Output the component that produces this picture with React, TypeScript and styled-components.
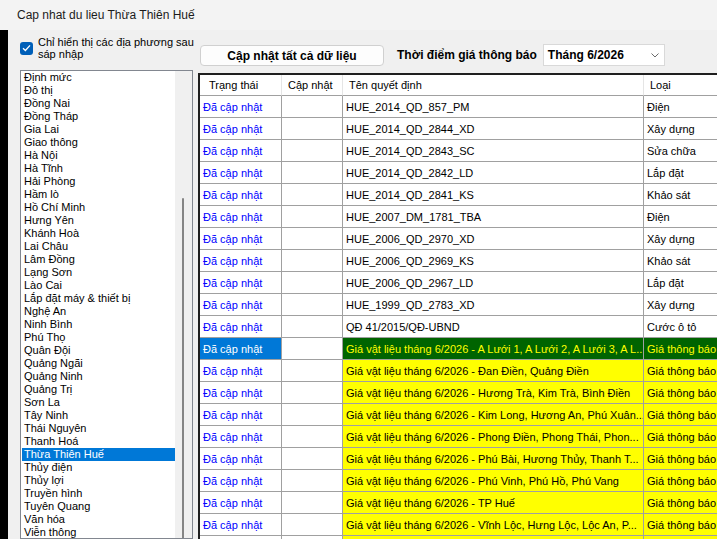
import React from 'react';
import styled, { createGlobalStyle } from 'styled-components';

const GlobalStyle = createGlobalStyle`
  html, body {
    margin: 0;
    padding: 0;
    background: #f0f0f0;
  }
  body {
    font-family: "Liberation Sans", Arial, sans-serif;
    color: #000;
  }
`;

interface GridRow {
  status: string;
  name: string;
  kind: string;
  notice?: boolean;
  selected?: boolean;
}

const PROVINCES = [
  'Định mức', 'Đô thị', 'Đồng Nai', 'Đồng Tháp', 'Gia Lai', 'Giao thông', 'Hà Nội',
  'Hà Tĩnh', 'Hải Phòng', 'Hầm lò', 'Hồ Chí Minh', 'Hưng Yên', 'Khánh Hoà', 'Lai Châu',
  'Lâm Đồng', 'Lạng Sơn', 'Lào Cai', 'Lắp đặt máy & thiết bị', 'Nghệ An', 'Ninh Bình',
  'Phú Thọ', 'Quân Đội', 'Quảng Ngãi', 'Quảng Ninh', 'Quảng Trị', 'Sơn La', 'Tây Ninh',
  'Thái Nguyên', 'Thanh Hoá', 'Thừa Thiên Huế', 'Thủy điện', 'Thủy lợi', 'Truyền hình',
  'Tuyên Quang', 'Văn hóa', 'Viễn thông',
];

const SELECTED_PROVINCE = 'Thừa Thiên Huế';
const DONE = 'Đã cập nhật';
const PRICE = 'Giá vật liệu tháng 6/2026 - ';

const ROWS: GridRow[] = [
  { status: DONE, name: 'HUE_2014_QD_857_PM', kind: 'Điện' },
  { status: DONE, name: 'HUE_2014_QD_2844_XD', kind: 'Xây dựng' },
  { status: DONE, name: 'HUE_2014_QD_2843_SC', kind: 'Sửa chữa' },
  { status: DONE, name: 'HUE_2014_QD_2842_LD', kind: 'Lắp đặt' },
  { status: DONE, name: 'HUE_2014_QD_2841_KS', kind: 'Khảo sát' },
  { status: DONE, name: 'HUE_2007_DM_1781_TBA', kind: 'Điện' },
  { status: DONE, name: 'HUE_2006_QD_2970_XD', kind: 'Xây dựng' },
  { status: DONE, name: 'HUE_2006_QD_2969_KS', kind: 'Khảo sát' },
  { status: DONE, name: 'HUE_2006_QD_2967_LD', kind: 'Lắp đặt' },
  { status: DONE, name: 'HUE_1999_QD_2783_XD', kind: 'Xây dựng' },
  { status: DONE, name: 'QĐ 41/2015/QĐ-UBND', kind: 'Cước ô tô' },
  { status: DONE, name: PRICE + 'A Lưới 1, A Lưới 2, A Lưới 3, A L...', kind: 'Giá thông báo', notice: true, selected: true },
  { status: DONE, name: PRICE + 'Đan Điền, Quảng Điền', kind: 'Giá thông báo', notice: true },
  { status: DONE, name: PRICE + 'Hương Trà, Kim Trà, Bình Điền', kind: 'Giá thông báo', notice: true },
  { status: DONE, name: PRICE + 'Kim Long, Hương An, Phú Xuân...', kind: 'Giá thông báo', notice: true },
  { status: DONE, name: PRICE + 'Phong Điền, Phong Thái, Phon...', kind: 'Giá thông báo', notice: true },
  { status: DONE, name: PRICE + 'Phú Bài, Hương Thủy, Thanh T...', kind: 'Giá thông báo', notice: true },
  { status: DONE, name: PRICE + 'Phú Vinh, Phú Hồ, Phú Vang', kind: 'Giá thông báo', notice: true },
  { status: DONE, name: PRICE + 'TP Huế', kind: 'Giá thông báo', notice: true },
  { status: DONE, name: PRICE + 'Vĩnh Lộc, Hưng Lộc, Lộc An, P...', kind: 'Giá thông báo', notice: true },
];

const Window = styled.div`
  width: 717px;
  height: 539px;
  overflow: hidden;
  display: flex;
  flex-direction: column;
  background: #f0f0f0;
`;

const TitleBar = styled.div`
  height: 30px;
  flex: none;
  display: flex;
  align-items: center;
  padding-left: 17px;
  background: #f3f3f3;
  font-size: 12px;
  color: #1b1b1b;
`;

const Body = styled.div`
  flex: 1;
  min-height: 0;
  display: flex;
`;

const Edge = styled.div`
  width: 8px;
  flex: none;
  background: #000;
`;

const LeftPanel = styled.div`
  width: 190px;
  flex: none;
  display: flex;
  flex-direction: column;
  padding: 6px 5px 0 12px;
  box-sizing: border-box;
`;

const CheckRow = styled.label`
  display: flex;
  align-items: center;
  gap: 5px;
  font-size: 11px;
  line-height: 12px;
  color: #000;
`;

const CheckBox = styled.span`
  width: 13px;
  height: 13px;
  flex: none;
  border-radius: 3px;
  background: #005fb8;
  display: flex;
  align-items: center;
  justify-content: center;
`;

const CheckText = styled.span`
  flex: none;
  width: 160px;
`;

const ListBox = styled.div`
  margin-top: 10px;
  flex: 1;
  min-height: 0;
  display: flex;
  border: 1px solid #828790;
  background: #fff;
  padding-left: 1px;
  overflow: hidden;
`;

const ListItems = styled.div`
  width: 153px;
  flex: none;
`;

const ListItem = styled.div<{ $active?: boolean }>`
  height: 13px;
  line-height: 13px;
  padding-left: 2px;
  font-size: 11px;
  white-space: nowrap;
  background: ${(p) => (p.$active ? '#0078d7' : 'transparent')};
  color: ${(p) => (p.$active ? '#fff' : '#000')};
`;

const ScrollTrack = styled.div`
  width: 17px;
  flex: none;
  background: #f0f0f0;
`;

const ScrollThumb = styled.div`
  width: 2px;
  margin-left: 7px;
  border-radius: 1px;
  background: #858585;
`;

const RightPanel = styled.div`
  flex: 1;
  min-width: 0;
  display: flex;
  flex-direction: column;
`;

const Toolbar = styled.div`
  display: flex;
  align-items: center;
  height: 22px;
  margin-top: 14px;
  padding-left: 2px;
`;

const ActionButton = styled.button`
  width: 184px;
  height: 21px;
  margin-top: 1px;
  border: 1px solid #d0d0d0;
  border-radius: 4px;
  background: #fdfdfd;
  font-family: inherit;
  font-size: 12px;
  font-weight: bold;
  color: #000;
  padding: 0;
`;

const FieldLabel = styled.span`
  margin-left: 13px;
  font-size: 12px;
  font-weight: bold;
`;

const Combo = styled.div`
  margin-left: 6px;
  width: 122px;
  height: 22px;
  box-sizing: border-box;
  border: 1px solid #d9d9d9;
  background: #fff;
  display: flex;
  align-items: center;
  justify-content: space-between;
  padding: 0 5px 0 4px;
  font-size: 12px;
  font-weight: bold;
`;

const GridFrame = styled.div`
  margin-top: 7px;
  flex: 1;
  min-height: 0;
  border-top: 2px solid #1f1f1f;
  border-left: 2px solid #1f1f1f;
  background: #fff;
  overflow: hidden;
`;

const Table = styled.table`
  width: 545px;
  table-layout: fixed;
  border-collapse: separate;
  border-spacing: 0;
  font-size: 11px;
`;

const HeadCell = styled.th`
  height: 21px;
  box-sizing: border-box;
  padding: 0 0 0 6px;
  text-align: left;
  font-weight: normal;
  white-space: nowrap;
  border-right: 1px solid #e5e5e5;
  border-bottom: 1px solid #a0a0a0;

  &:first-child {
    padding-left: 9px;
  }
`;

type Tone = 'plain' | 'status' | 'picked' | 'notice' | 'focus';

const TONES: Record<Tone, { bg: string; fg: string }> = {
  plain: { bg: '#fff', fg: '#000' },
  status: { bg: '#fff', fg: '#0000ff' },
  picked: { bg: '#0078d7', fg: '#fff' },
  notice: { bg: '#ffff00', fg: '#000' },
  focus: { bg: '#006400', fg: '#ffff00' },
};

const Cell = styled.td<{ $tone: Tone }>`
  height: 22px;
  box-sizing: border-box;
  padding: 0 0 0 3px;
  white-space: nowrap;
  overflow: hidden;
  border-right: 1px solid #a0a0a0;
  border-bottom: 1px solid #a0a0a0;
  background: ${(p) => TONES[p.$tone].bg};
  color: ${(p) => TONES[p.$tone].fg};
`;

const Check = () => (
  <svg width="9" height="8" viewBox="0 0 9 8">
    <polyline points="1,4.2 3.4,6.5 8,1.4" fill="none" stroke="#fff" strokeWidth="1.3" />
  </svg>
);

const Chevron = () => (
  <svg width="8" height="5" viewBox="0 0 8 5">
    <polyline points="0.5,0.5 4,4 7.5,0.5" fill="none" stroke="#6b6b6b" strokeWidth="1" />
  </svg>
);

const App = () => {
  // scroll thumb offset of the province list
  const thumbTop = 127;

  return (
    <Window>
      <GlobalStyle />
      <TitleBar>Cap nhat du lieu Thừa Thiên Huế</TitleBar>
      <Body>
        <Edge />
        <LeftPanel>
          <CheckRow>
            <CheckBox>
              <Check />
            </CheckBox>
            <CheckText>Chỉ hiển thị các địa phương sau sáp nhập</CheckText>
          </CheckRow>
          <ListBox>
            <ListItems>
              {PROVINCES.map((p) => (
                <ListItem key={p} $active={p === SELECTED_PROVINCE}>
                  {p}
                </ListItem>
              ))}
            </ListItems>
            <ScrollTrack>
              <ScrollThumb style={{ marginTop: thumbTop, height: 360 }} />
            </ScrollTrack>
          </ListBox>
        </LeftPanel>
        <RightPanel>
          <Toolbar>
            <ActionButton>Cập nhật tất cả dữ liệu</ActionButton>
            <FieldLabel>Thời điểm giá thông báo</FieldLabel>
            <Combo>
              <span>Tháng 6/2026</span>
              <Chevron />
            </Combo>
          </Toolbar>
          <GridFrame>
            <Table>
              <colgroup>
                <col style={{ width: 82 }} />
                <col style={{ width: 61 }} />
                <col style={{ width: 301 }} />
                <col style={{ width: 101 }} />
              </colgroup>
              <thead>
                <tr>
                  <HeadCell>Trạng thái</HeadCell>
                  <HeadCell>Cập nhật</HeadCell>
                  <HeadCell>Tên quyết định</HeadCell>
                  <HeadCell>Loại</HeadCell>
                </tr>
              </thead>
              <tbody>
                {ROWS.map((r, i) => {
                  const tone: Tone = r.selected ? 'focus' : r.notice ? 'notice' : 'plain';
                  return (
                    <tr key={i}>
                      <Cell $tone={r.selected ? 'picked' : 'status'}>{r.status}</Cell>
                      <Cell $tone="plain" />
                      <Cell $tone={tone}>{r.name}</Cell>
                      <Cell $tone={tone}>{r.kind}</Cell>
                    </tr>
                  );
                })}
                <tr>
                  <Cell $tone="status" />
                  <Cell $tone="plain" />
                  <Cell $tone="notice" />
                  <Cell $tone="notice" />
                </tr>
              </tbody>
            </Table>
          </GridFrame>
        </RightPanel>
      </Body>
    </Window>
  );
};

export default App;
